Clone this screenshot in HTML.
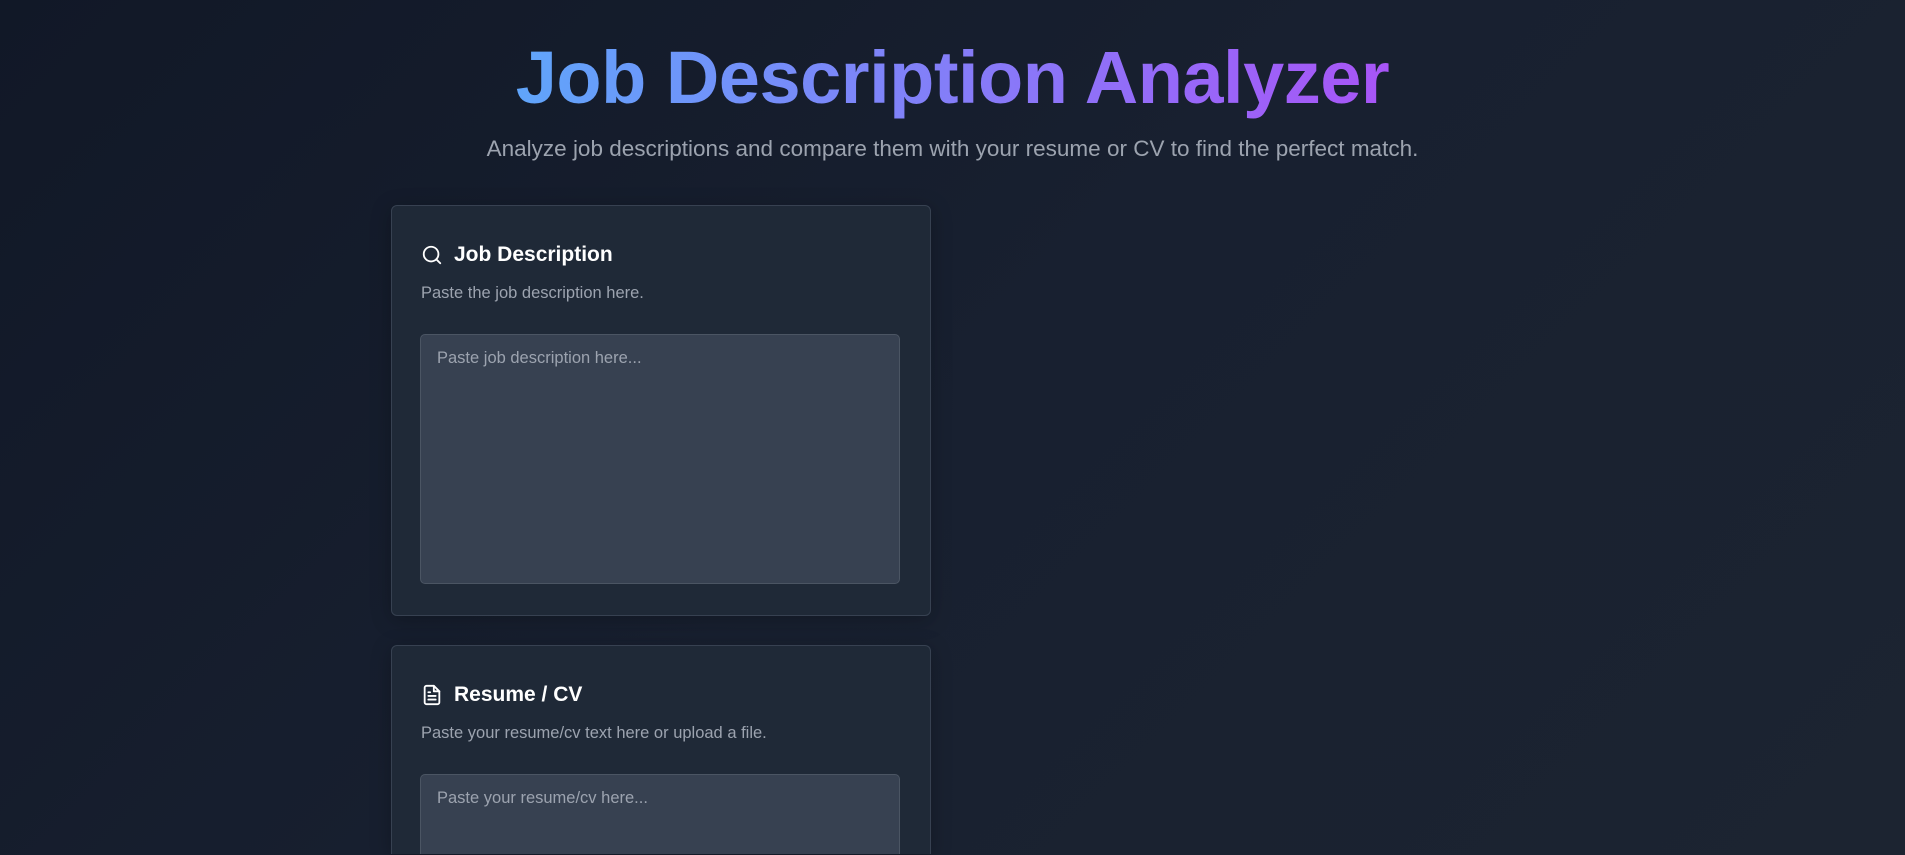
<!DOCTYPE html>
<html><head><meta charset="utf-8"><style>
html,body{margin:0;height:855px;overflow:hidden}
body{background:linear-gradient(135deg,#111827 0%,#182030 50%,#1c2431 100%);font-family:"Liberation Sans",sans-serif;position:relative;width:1905px}
h1{position:absolute;left:0;width:1905px;top:31px;margin:0;text-align:center;font-size:74px;font-weight:bold;line-height:94px;letter-spacing:-0.5px}
h1 span{background:linear-gradient(90deg,#60a5fa,#a855f7);-webkit-background-clip:text;background-clip:text;color:transparent}
.sub{position:absolute;left:0;width:1905px;top:134px;text-align:center;font-size:22.5px;color:#9ca3af;line-height:30px}
.card{position:absolute;left:391px;width:538px;background:#1f2937;border:1px solid #374151;border-radius:6px;box-shadow:0 4px 20px rgba(0,0,0,.25)}
.h{position:absolute;left:29px;top:37px;display:flex;align-items:center;color:#fff;font-weight:bold;font-size:21px}
.h svg{margin-right:11px}
.d{position:absolute;left:29px;top:78px;color:#9ca3af;font-size:16.5px}
.ta{position:absolute;left:28px;top:128px;width:480px;background:#374151;border:1px solid #4b5563;border-radius:5px;color:#9ca3af;font-size:16.5px;padding:14px 0 0 16px;box-sizing:border-box}
</style></head><body>
<h1><span>Job Description Analyzer</span></h1>
<div class="sub">Analyze job descriptions and compare them with your resume or CV to find the perfect match.</div>
<div class="card" style="top:205px;height:409px">
<div class="h"><svg width="22" height="22" viewBox="0 0 24 24" fill="none" stroke="#fff" stroke-width="2" stroke-linecap="round"><circle cx="11" cy="11" r="8"/><path d="M21 21l-4.3-4.3"/></svg>Job Description</div>
<div class="d">Paste the job description here.</div>
<div class="ta" style="height:250px">Paste job description here...</div>
</div>
<div class="card" style="top:645px;height:208px;border-bottom:none;border-radius:6px 6px 0 0">
<div class="h"><svg width="22" height="22" viewBox="0 0 24 24" fill="none" stroke="#fff" stroke-width="2" stroke-linecap="round" stroke-linejoin="round"><path d="M14 2H6a2 2 0 0 0-2 2v16a2 2 0 0 0 2 2h12a2 2 0 0 0 2-2V8z"/><path d="M14 2v6h6M16 13H8M16 17H8M10 9H8"/></svg>Resume / CV</div>
<div class="d">Paste your resume/cv text here or upload a file.</div>
<div class="ta" style="height:80px;border-bottom:none;border-radius:5px 5px 0 0">Paste your resume/cv here...</div>
</div>
</body></html>
